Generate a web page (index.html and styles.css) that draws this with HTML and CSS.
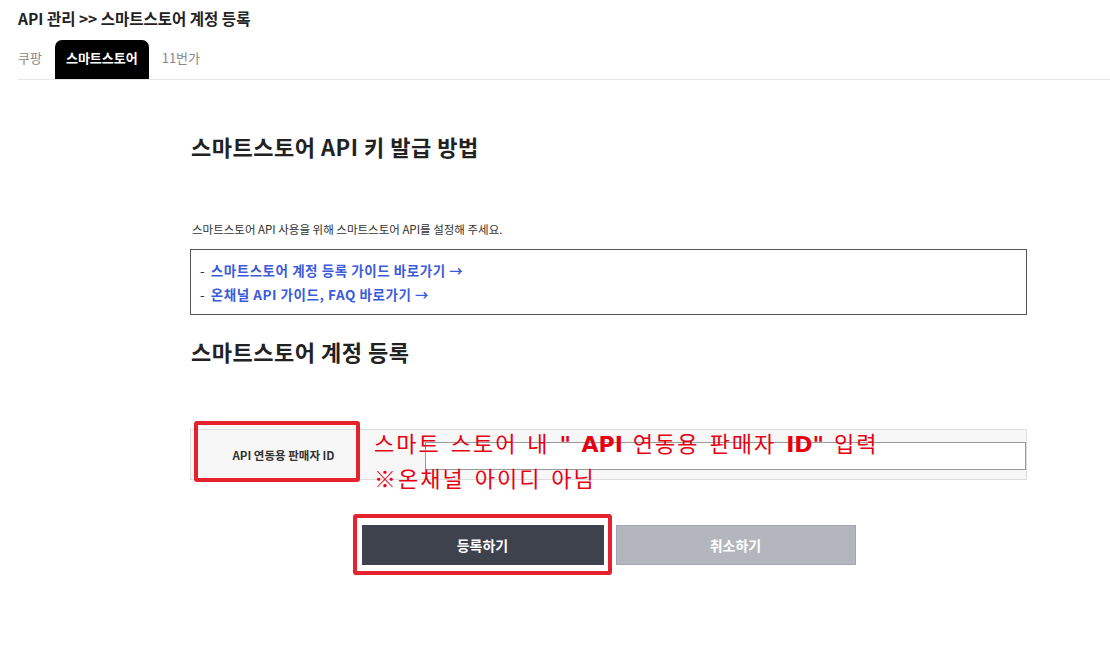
FILE: index.html
```html
<!DOCTYPE html>
<html>
<head>
  <title>API 관리 - 스마트스토어 계정 등록</title>
  <link rel="stylesheet" href="styles.css">
</head>
<body>
  <div class="page-header">
    <h1 class="page-title">API 관리 &gt;&gt; 스마트스토어 계정 등록</h1>
    <div class="tabs">
      <a class="tab">쿠팡</a>
      <a class="tab tab-active">스마트스토어</a>
      <a class="tab">11번가</a>
    </div>
  </div>

  <div class="content">
    <h2 class="section-title">스마트스토어 API 키 발급 방법</h2>
    <p class="section-desc">스마트스토어 API 사용을 위해 스마트스토어 API를 설정해 주세요.</p>

    <div class="guide-box">
      <div class="guide-line">-&nbsp;<a class="guide-link">스마트스토어 계정 등록 가이드 바로가기 →</a></div>
      <div class="guide-line">-&nbsp;<a class="guide-link">온채널 API 가이드, FAQ 바로가기 →</a></div>
    </div>

    <h2 class="section-title section-title-2">스마트스토어 계정 등록</h2>

    <div class="form-row">
      <label for="sellerId" class="form-label">API 연동용 판매자 ID</label>
      <div class="form-field">
        <input type="text" id="sellerId" class="form-input">
      </div>
      <span class="mark-box mark-label"></span>
      <div class="note">
        <div>스마트 스토어 내 <b class="note-strong">" API</b> 연동용 판매자 <b class="note-strong">ID"</b> 입력</div>
        <div>※온채널 아이디 아님</div>
      </div>
    </div>

    <div class="buttons">
      <div class="btn-wrap">
        <button type="button" class="btn btn-primary">등록하기</button>
        <span class="mark-box mark-button"></span>
      </div>
      <button type="button" class="btn btn-cancel">취소하기</button>
    </div>
  </div>
</body>
</html>
```

FILE: styles.css
```css
/* page */
body {
  margin: 0;
  padding-bottom: 80px;
  font-family: "Noto Sans CJK KR", "Noto Sans", sans-serif;
  color: #222;
  background-color: #FFF;
}

.page-header {
  padding: 8px 0 0 18px;
}

.page-title {
  margin: 0;
  font-size: 15.5px;
  line-height: 21px;
  font-weight: 700;
}

.tabs {
  display: flex;
  gap: 2px;
  margin-top: 11px;
  border-bottom: 1px solid #E6E6E6;
}

.tab {
  height: 39px;
  padding: 0 11px 3px;
  box-sizing: border-box;
  line-height: 36px;
  font-size: 13px;
  color: #888;
  cursor: pointer;
}

.tab:first-child {
  padding-left: 0;
}

.tab-active {
  background-color: #000;
  color: #FFF;
  font-weight: 700;
  border-radius: 7px 7px 0 0;
}

/* content */
.content {
  width: 837px;
  margin: 0 0 0 190px;
}

.section-title {
  margin: 51px 0 0;
  font-size: 22px;
  line-height: 30px;
  font-weight: 700;
  letter-spacing: 0.5px;
  padding-left: 1px;
}

.section-title-2 {
  margin-top: 21px;
}

.section-desc {
  margin: 60px 0 0;
  font-size: 11.5px;
  line-height: 16px;
  color: #333;
  padding-left: 2px;
}

.guide-box {
  margin-top: 12px;
  padding: 8px 9px;
  border: 1px solid #555;
}

.guide-line {
  font-size: 13.5px;
  line-height: 24px;
  color: #333;
}

.guide-link {
  margin-left: 3px;
  color: #3B5BDB;
  font-weight: 700;
  letter-spacing: 0.55px;
  cursor: pointer;
}

/* form */
.form-row {
  position: relative;
  display: flex;
  margin-top: 63px;
  height: 51px;
  box-sizing: border-box;
  border: 1px solid #DDD;
  background-color: #F7F7F7;
}

.form-label {
  width: 185px;
  display: flex;
  align-items: center;
  justify-content: center;
  font-size: 11.5px;
  font-weight: 700;
  color: #333;
}

.form-field {
  flex: 1;
  padding: 11px 0 9px 49px;
}

.form-input {
  width: 100%;
  height: 28px;
  box-sizing: border-box;
  border: 1px solid #999;
  background-color: #FFF;
}

.mark-box {
  position: absolute;
  border: 4px solid #E5232F;
  border-radius: 3px;
}

.mark-label {
  left: 3px;
  top: -9px;
  width: 166px;
  height: 61px;
  box-sizing: border-box;
}

.note {
  position: absolute;
  left: 183px;
  top: -4px;
  font-size: 22px;
  line-height: 32px;
  letter-spacing: 2px;
  word-spacing: 3px;
  color: #E60012;
  white-space: nowrap;
}

.note-strong {
  font-family: "DejaVu Sans", sans-serif;
  font-weight: 700;
  letter-spacing: 0;
}

/* buttons */
.buttons {
  display: flex;
  justify-content: center;
  gap: 12px;
  margin-top: 45px;
}

.btn-wrap {
  position: relative;
  height: 40px;
}

.btn {
  height: 40px;
  border: none;
  font-family: inherit;
  font-size: 14px;
  font-weight: 700;
  color: #FFF;
  cursor: pointer;
}

.btn-primary {
  width: 242px;
  background-color: #3D424D;
}

.btn-cancel {
  width: 240px;
  background-color: #B3B7BD;
  border: 1px solid #A3A7AD;
}

.mark-button {
  left: -9px;
  right: -8px;
  top: -11px;
  bottom: -10px;
}
```
